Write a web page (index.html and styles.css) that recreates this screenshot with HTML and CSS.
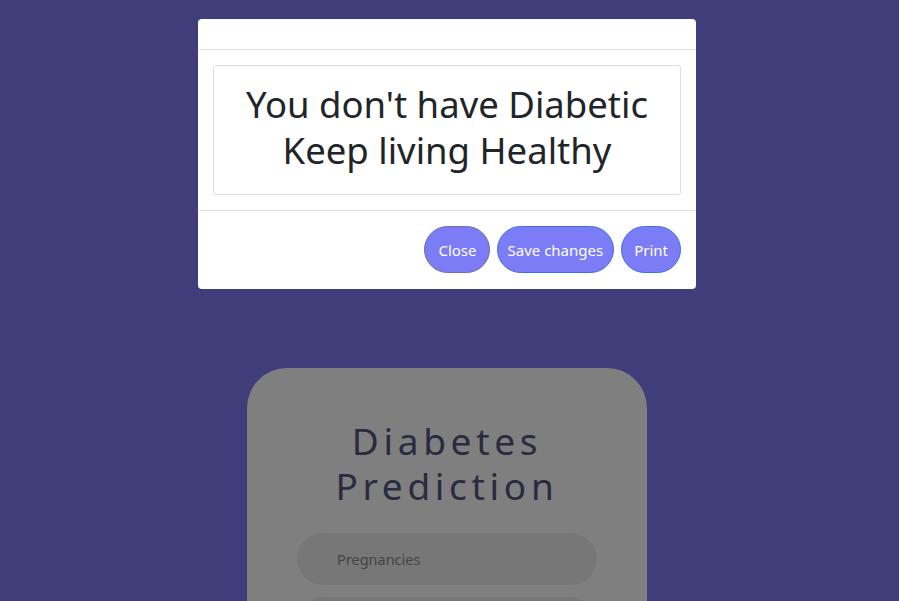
FILE: index.html
```html
<!DOCTYPE html>
<html lang="en">
<head>
<meta charset="utf-8">
<title>Diabetes Prediction</title>
<link rel="stylesheet" href="styles.css">
</head>
<body>
<main class="page">
  <section class="predict-card">
    <h1 class="predict-title">Diabetes Prediction</h1>
    <form class="predict-form">
      <input class="field" type="text" placeholder="Pregnancies">
      <input class="field" type="text" placeholder="Glucose">
    </form>
  </section>
</main>

<div class="backdrop"></div>
<div class="modal">
  <div class="modal-dialog">
    <div class="modal-header"></div>
    <div class="modal-body">
      <div class="result-card">
        <p class="result-text">You don't have Diabetic<br>Keep living Healthy</p>
      </div>
    </div>
    <div class="modal-footer">
      <button class="btn btn-close" type="button">Close</button>
      <button class="btn btn-save" type="button">Save changes</button>
      <button class="btn" type="button">Print</button>
    </div>
  </div>
</div>
</body>
</html>
```

FILE: styles.css
```css
* { box-sizing: border-box; }

html, body {
  margin: 0;
  height: 100%;
}

body {
  background: #7e7af4;
  font-family: "Noto Sans", "Open Sans", sans-serif;
  color: #212529;
  overflow: hidden;
}

.page {
  display: flex;
  justify-content: center;
  padding-top: 368px;
}

.predict-card {
  width: 400px;
  height: 500px;
  margin-left: -5px;
  background: #ffffff;
  border-radius: 40px;
  display: flex;
  flex-direction: column;
  align-items: center;
  padding-top: 50px;
}

.predict-title {
  margin: 0;
  width: 280px;
  text-align: center;
  font-weight: 400;
  font-size: 37px;
  line-height: 45px;
  letter-spacing: 4.7px;
  color: #545480;
}

.predict-form {
  display: flex;
  flex-direction: column;
  gap: 12px;
  margin-top: 25px;
}

.field {
  width: 300px;
  height: 52px;
  border: none;
  border-radius: 26px;
  background: #eeeeee;
  padding: 0 40px;
  font-family: inherit;
  font-size: 14.5px;
  outline: none;
}

.field::placeholder { color: #888888; }

.backdrop {
  position: fixed;
  inset: 0;
  background: rgba(0, 0, 0, 0.5);
}

.modal {
  position: fixed;
  inset: 0;
  display: flex;
  justify-content: center;
  align-items: flex-start;
  padding-top: 19px;
}

.modal-dialog {
  width: 498px;
  background: #ffffff;
  border-radius: 4px;
  margin-left: -5px;
}

.modal-header {
  height: 31px;
  border-bottom: 1px solid #dee2e6;
}

.modal-body {
  padding: 15px;
}

.result-card {
  border: 1px solid #dfdfdf;
  border-radius: 3px;
  height: 130px;
  display: flex;
  align-items: center;
  justify-content: center;
  padding-bottom: 6px;
}

.result-text {
  margin: 0;
  text-align: center;
  font-size: 36.5px;
  line-height: 46px;
  color: #212529;
}

.modal-footer {
  border-top: 1px solid #dee2e6;
  display: flex;
  justify-content: flex-end;
  gap: 7px;
  padding: 15px 15px 16px 15px;
}

.btn {
  height: 47px;
  padding: 0 12px;
  border-radius: 24px;
  border: 1px solid #3f6fe6;
  background: #7c7cf6;
  color: #ffffff;
  font-family: inherit;
  font-size: 15px;
}

.btn-save {
  padding: 0 10px;
}

.btn-close {
  padding: 0 12px 0 13px;
  border-color: #6f6f9c;
}
```
